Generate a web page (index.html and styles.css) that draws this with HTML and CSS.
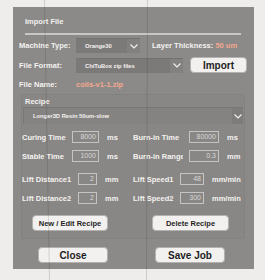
FILE: index.html
```html
<!DOCTYPE html>
<html lang="en">

<head>
	<meta charset="UTF-8">
	<meta name="viewport" content="width=device-width, initial-scale=1.0">
	<title>Import File</title>
	<link rel="stylesheet" href="styles.css">
</head>

<body>
	<div class="dialog">
		<div class="title">Import File</div>
		<div class="separator"></div>

		<!-- Machine -->
		<div class="row row-machine">
			<span class="label label-main">Machine Type:</span>
			<div class="combo combo-machine">
				<span class="combo-text">Orange30</span>
				<span class="combo-arrow">
					<svg width="8" height="5" viewBox="0 0 8 5"><polyline points="0.5,0.5 4,4 7.5,0.5" fill="none" stroke="#f2f0ee" stroke-width="1.2"/></svg>
				</span>
			</div>
			<span class="label thickness">Layer Thickness: <span class="accent">50 um</span></span>
		</div>

		<!-- Format -->
		<div class="row row-format">
			<span class="label label-main">File Format:</span>
			<div class="combo combo-format">
				<span class="combo-text">ChiTuBox zip files</span>
				<span class="combo-arrow">
					<svg width="8" height="5" viewBox="0 0 8 5"><polyline points="0.5,0.5 4,4 7.5,0.5" fill="none" stroke="#f2f0ee" stroke-width="1.2"/></svg>
				</span>
			</div>
			<button class="btn btn-import">Import</button>
		</div>

		<!-- Name -->
		<div class="row row-name">
			<span class="label label-main">File Name:</span>
			<span class="label accent">coils-v1-1.zip</span>
		</div>

		<!-- Recipe -->
		<div class="group">
			<div class="group-title">Recipe</div>
			<div class="combo combo-recipe">
				<span class="combo-text">Longer3D Resin 50um-slow</span>
				<span class="combo-arrow">
					<svg width="8" height="5" viewBox="0 0 8 5"><polyline points="0.5,0.5 4,4 7.5,0.5" fill="none" stroke="#f2f0ee" stroke-width="1.2"/></svg>
				</span>
			</div>

			<div class="field-row first">
				<div class="field left">
					<span class="label flabel w50">Curing Time</span>
					<span class="value w27">8000</span>
					<span class="label unit">ms</span>
				</div>
				<div class="field right">
					<span class="label flabel clip">Burn-in Time</span>
					<span class="value w30">80000</span>
					<span class="label unit">ms</span>
				</div>
			</div>

			<div class="field-row">
				<div class="field left">
					<span class="label flabel w50">Stable Time</span>
					<span class="value w27">1000</span>
					<span class="label unit">ms</span>
				</div>
				<div class="field right">
					<span class="label flabel clip">Burn-in Range</span>
					<span class="value w30">0.3</span>
					<span class="label unit">mm</span>
				</div>
			</div>

			<div class="field-row spaced">
				<div class="field left">
					<span class="label flabel w56">Lift Distance1</span>
					<span class="value w19">2</span>
					<span class="label unit">mm</span>
				</div>
				<div class="field right">
					<span class="label flabel w47">Lift Speed1</span>
					<span class="value w24">48</span>
					<span class="label unit">mm/min</span>
				</div>
			</div>

			<div class="field-row">
				<div class="field left">
					<span class="label flabel w56">Lift Distance2</span>
					<span class="value w19">2</span>
					<span class="label unit">mm</span>
				</div>
				<div class="field right">
					<span class="label flabel w47">Lift Speed2</span>
					<span class="value w24">300</span>
					<span class="label unit">mm/min</span>
				</div>
			</div>

			<div class="group-buttons">
				<button class="btn btn-small btn-new">New / Edit Recipe</button>
				<button class="btn btn-small btn-delete">Delete Recipe</button>
			</div>
		</div>

		<div class="footer">
			<button class="btn btn-big">Close</button>
			<button class="btn btn-big">Save Job</button>
		</div>
	</div>

	<!-- guide lines over the window -->
	<svg class="guides" width="265" height="280" viewBox="0 0 265 280">
		<line x1="44.5" y1="0" x2="49.5" y2="280" stroke="rgba(40,40,40,0.16)" stroke-width="1"/>
		<line x1="147.5" y1="0" x2="146.5" y2="280" stroke="rgba(40,40,40,0.16)" stroke-width="1"/>
	</svg>
</body>

</html>
```

FILE: styles.css
```css
body {
	font-family: "Liberation Sans", Arial, sans-serif;
	margin: 0;
	background-color: #efedeb;
	position: relative;
	width: 265px;
	height: 280px;
	overflow: hidden;
}

.dialog {
	margin: 7px 0 0 13px;
	width: 241px;
	height: 262px;
	box-sizing: border-box;
	background: #8c8a88;
	overflow: hidden;
}

.title {
	margin: 10px 0 0 12px;
	font-size: 7.5px;
	line-height: 10px;
	font-weight: bold;
	color: #f4f2f0;
}

.separator {
	margin: 6px 13px 0 12px;
	height: 2px;
	background: #c9c7c5;
}

.label {
	font-size: 7.5px;
	font-weight: bold;
	color: #f4f2f0;
	white-space: nowrap;
}

.accent {
	color: #f3a88e;
}

.row {
	display: flex;
	align-items: center;
	padding-left: 6px;
}

.label-main {
	width: 57px;
}

.row-machine {
	margin-top: 3px;
	height: 15px;
}

.row-format {
	margin-top: 4px;
	height: 16px;
}

.row-name {
	margin-top: 5px;
	height: 12px;
}

.thickness {
	margin-left: 12px;
}

/* combo boxes */
.combo {
	display: flex;
	align-items: center;
	height: 15px;
	box-sizing: border-box;
	background: #7c7a78;
	border-top: 1px solid #747270;
}

.combo-text {
	flex: 1;
	padding-left: 9px;
	font-size: 5.8px;
	font-weight: bold;
	color: #f4f2f0;
	white-space: nowrap;
	overflow: hidden;
}

.combo-arrow {
	width: 13px;
	height: 100%;
	display: flex;
	align-items: center;
	justify-content: center;
	background: #83817f;
}

.combo-machine {
	width: 64px;
}

.combo-format {
	width: 107px;
}

.combo-recipe {
	height: 17px;
	margin: 0 1px;
	background: #858381;
	border-top: 1px solid #7a7876;
	border-left: 1px solid #7a7876;
}

.combo-recipe .combo-arrow {
	width: 11px;
	background: #7e7c7a;
}

/* buttons */
.btn {
	font-family: "Liberation Sans", Arial, sans-serif;
	background: #f3f1ef;
	border: 1px solid #b4b2b0;
	border-radius: 4px;
	color: #1e1e1e;
	padding: 0;
	box-sizing: border-box;
	font-weight: bold;
}

.btn-import {
	margin-left: 7px;
	width: 57px;
	height: 16px;
	font-size: 10px;
}

.btn-small {
	height: 16px;
	font-size: 7.5px;
}

.btn-big {
	width: 70px;
	height: 16px;
	font-size: 10px;
}

/* recipe group */
.group {
	margin: 4px 0 0 8px;
	width: 224px;
	height: 145px;
	box-sizing: border-box;
	background: #898785;
	border: 1px solid #838180;
	border-radius: 3px;
}

.group-title {
	margin: 2px 0 0 3px;
	font-size: 7.5px;
	line-height: 10px;
	font-weight: bold;
	color: #f4f2f0;
}

.field-row {
	display: flex;
	height: 12px;
	margin-top: 7px;
}

.field-row.spaced {
	margin-top: 11px;
}

.field {
	display: flex;
	align-items: center;
}

.field.left {
	width: 111px;
}

.flabel {
	overflow: hidden;
}

.flabel.clip {
	width: 50px;
	margin-right: 6px;
}

.value {
	height: 12px;
	box-sizing: border-box;
	border: 1px solid #c6c4c2;
	padding-right: 2px;
	text-align: right;
	font-size: 7px;
	line-height: 10px;
	color: #d9d7d5;
}

.unit {
	margin-left: 8px;
}

.w19 { width: 19px; }
.w24 { width: 24px; }
.w27 { width: 27px; }
.w30 { width: 30px; }
.w47 { width: 47px; }
.w50 { width: 50px; }
.w56 { width: 56px; }

.group-buttons {
	display: flex;
	margin: 11px 0 0 10px;
}

.btn-new {
	width: 76px;
}

.btn-delete {
	margin-left: 44px;
	width: 77px;
}

.footer {
	display: flex;
	margin: 8px 0 0 25px;
	gap: 47px;
}

.guides {
	position: absolute;
	top: 0;
	left: 0;
	pointer-events: none;
}
```
